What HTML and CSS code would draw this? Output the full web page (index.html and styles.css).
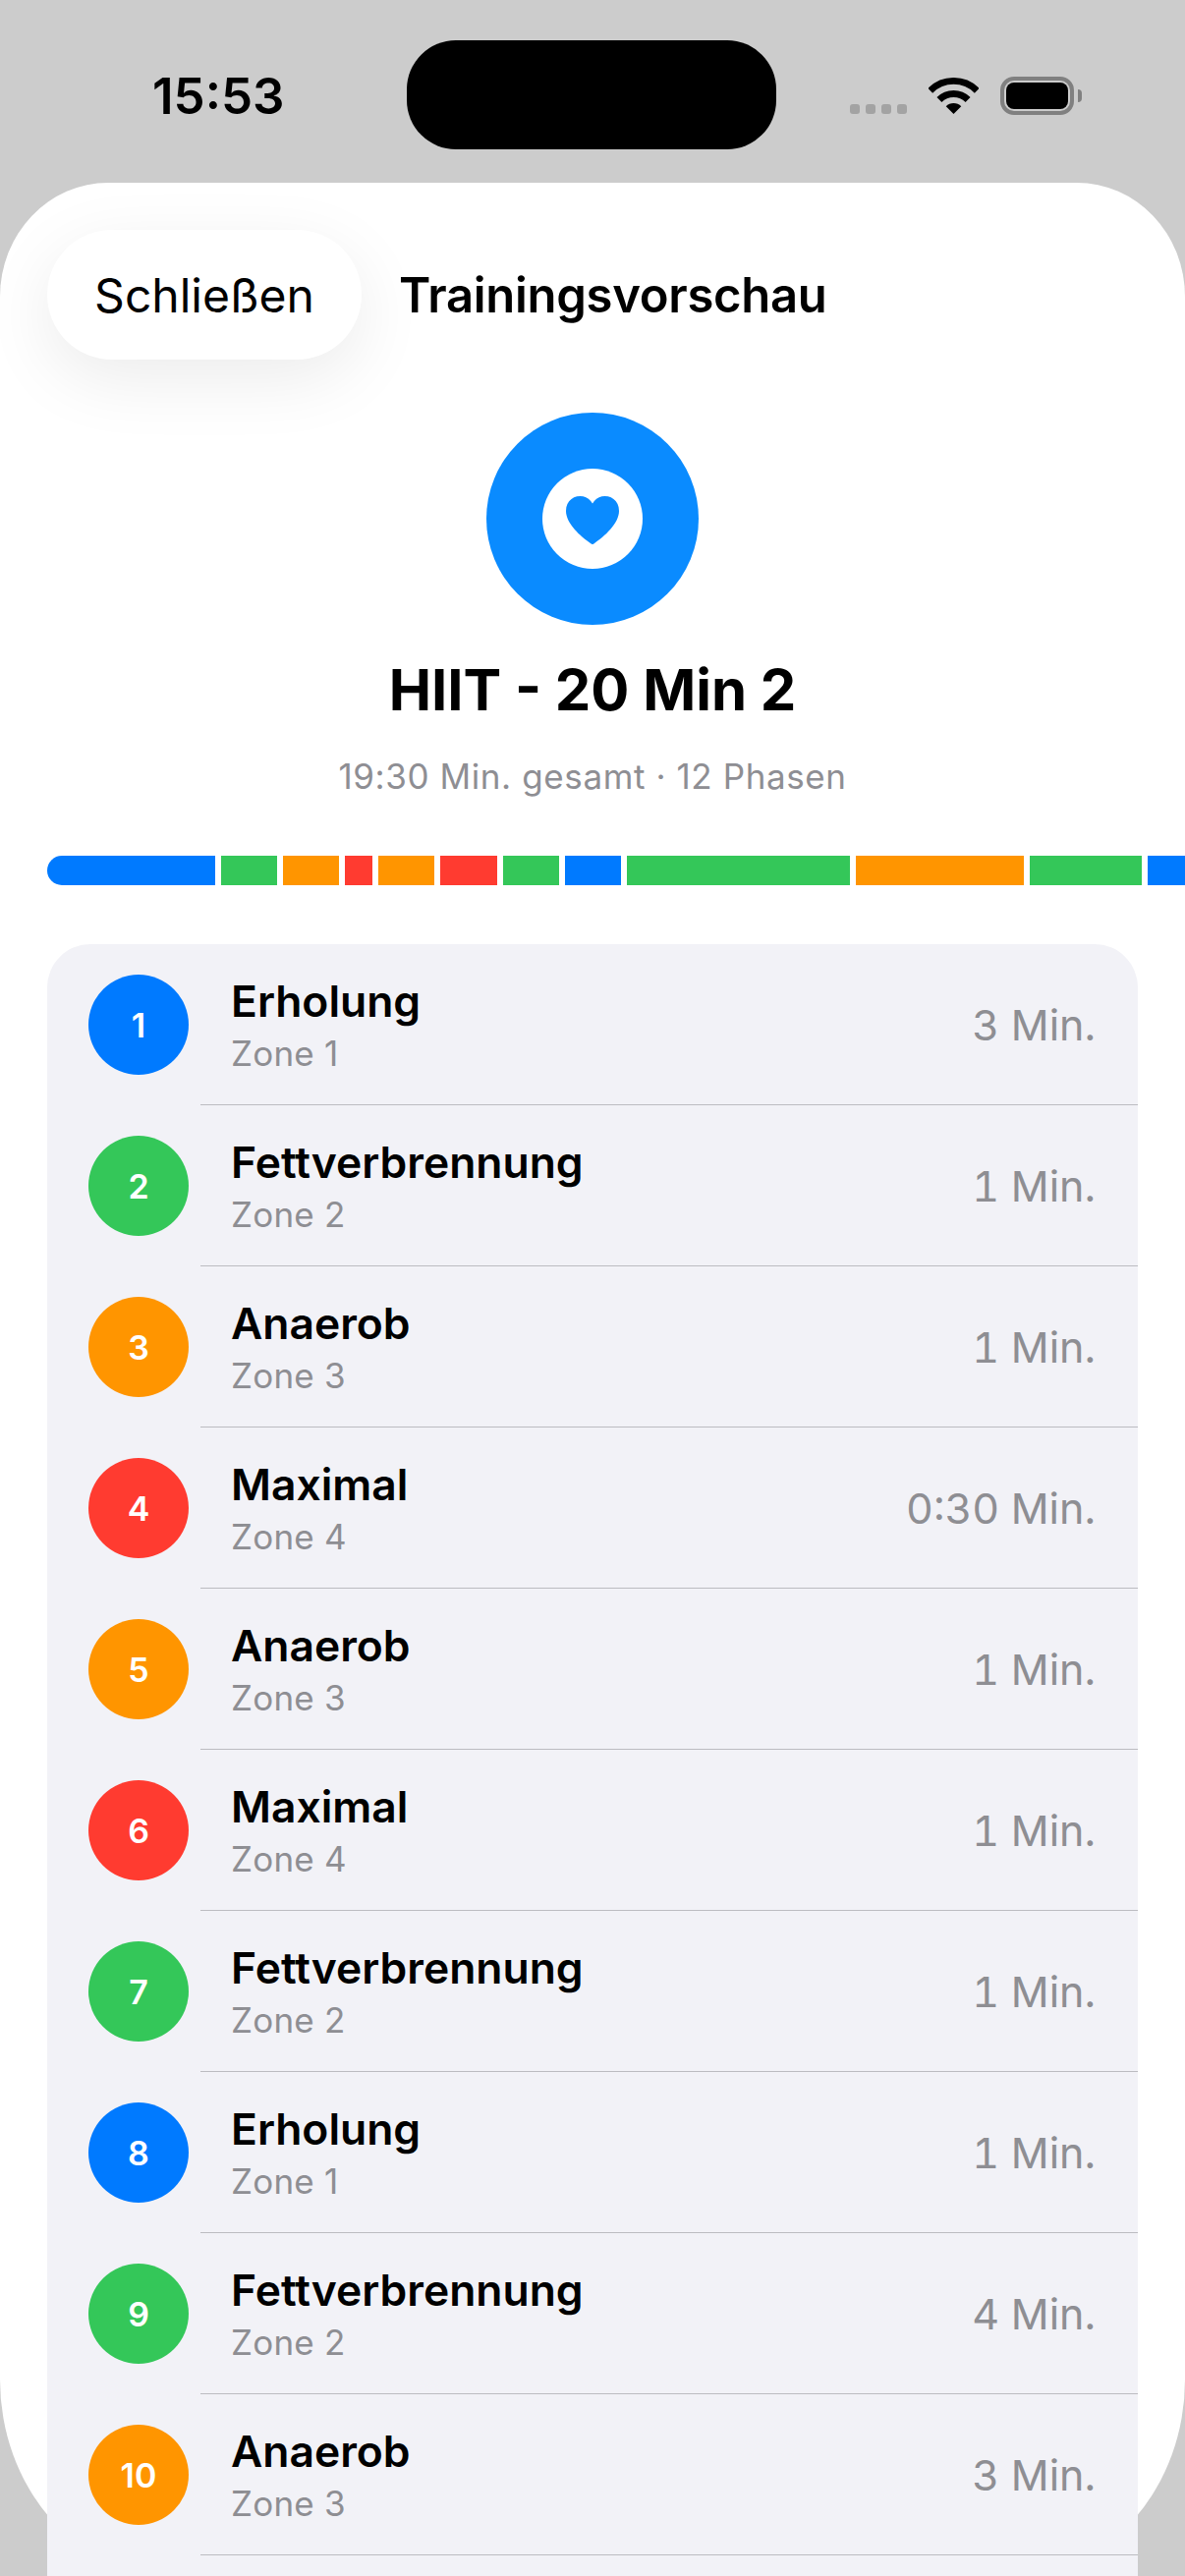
FILE: index.html
```html
<!DOCTYPE html>
<html lang="de">
<head>
    <meta charset="UTF-8">
    <meta name="viewport" content="width=device-width, initial-scale=1.0">
    <title>Trainingsvorschau</title>
    <link rel="stylesheet" href="styles.css">
</head>
<body>
    <div class="status-bar">
        <span class="time">15:53</span>
        <div class="island"></div>
        <div class="status-icons">
            <div class="signal"><i></i><i></i><i></i><i></i></div>
            <svg class="wifi" viewBox="0 0 51 37">
                <path d="M1.74 13.24A33.6 33.6 0 0 1 49.26 13.24" fill="none" stroke="#000" stroke-width="6.8"/>
                <path d="M10.93 22.43A20.6 20.6 0 0 1 40.07 22.43" fill="none" stroke="#000" stroke-width="7"/>
                <path d="M25.5 37L17.72 29.22A11 11 0 0 1 33.28 29.22Z" fill="#000"/>
            </svg>
            <div class="battery"><div class="battery-fill"></div></div>
        </div>
    </div>

    <div class="sheet">
        <div class="sheet-header">
            <button class="close-btn">Schließen</button>
            <h2>Trainingsvorschau</h2>
        </div>

        <div class="hero">
            <div class="hero-icon">
                <div class="hero-icon-inner">
                    <svg class="heart" viewBox="0 0 54 49">
                        <path d="M27 7.5C24 2.5 19.5 0 14.5 0C6 0 0 6.3 0 15C0 28 15 41 25 48C26 48.7 26.5 49 27 49C27.5 49 28 48.7 29 48C39 41 54 28 54 15C54 6.3 48 0 39.5 0C34.5 0 30 2.5 27 7.5Z" fill="#0a8bff"/>
                    </svg>
                </div>
            </div>
            <h1>HIIT - 20 Min 2</h1>
            <p>19:30 Min. gesamt · 12 Phasen</p>
        </div>

        <div class="timeline">
            <div class="seg blue" style="width:171px"></div>
            <div class="seg green" style="width:57px"></div>
            <div class="seg orange" style="width:57px"></div>
            <div class="seg red" style="width:28px"></div>
            <div class="seg orange" style="width:57px"></div>
            <div class="seg red" style="width:58px"></div>
            <div class="seg green" style="width:57px"></div>
            <div class="seg blue" style="width:57px"></div>
            <div class="seg green" style="width:227px"></div>
            <div class="seg orange" style="width:171px"></div>
            <div class="seg green" style="width:114px"></div>
            <div class="seg blue" style="width:57px"></div>
        </div>

        <div class="phase-list">
            <div class="phase">
                <div class="num blue">1</div>
                <div class="phase-body">
                    <div class="phase-text"><strong>Erholung</strong><span>Zone 1</span></div>
                    <div class="phase-time">3 Min.</div>
                </div>
            </div>
            <div class="phase">
                <div class="num green">2</div>
                <div class="phase-body">
                    <div class="phase-text"><strong>Fettverbrennung</strong><span>Zone 2</span></div>
                    <div class="phase-time">1 Min.</div>
                </div>
            </div>
            <div class="phase">
                <div class="num orange">3</div>
                <div class="phase-body">
                    <div class="phase-text"><strong>Anaerob</strong><span>Zone 3</span></div>
                    <div class="phase-time">1 Min.</div>
                </div>
            </div>
            <div class="phase">
                <div class="num red">4</div>
                <div class="phase-body">
                    <div class="phase-text"><strong>Maximal</strong><span>Zone 4</span></div>
                    <div class="phase-time">0:30 Min.</div>
                </div>
            </div>
            <div class="phase">
                <div class="num orange">5</div>
                <div class="phase-body">
                    <div class="phase-text"><strong>Anaerob</strong><span>Zone 3</span></div>
                    <div class="phase-time">1 Min.</div>
                </div>
            </div>
            <div class="phase">
                <div class="num red">6</div>
                <div class="phase-body">
                    <div class="phase-text"><strong>Maximal</strong><span>Zone 4</span></div>
                    <div class="phase-time">1 Min.</div>
                </div>
            </div>
            <div class="phase">
                <div class="num green">7</div>
                <div class="phase-body">
                    <div class="phase-text"><strong>Fettverbrennung</strong><span>Zone 2</span></div>
                    <div class="phase-time">1 Min.</div>
                </div>
            </div>
            <div class="phase">
                <div class="num blue">8</div>
                <div class="phase-body">
                    <div class="phase-text"><strong>Erholung</strong><span>Zone 1</span></div>
                    <div class="phase-time">1 Min.</div>
                </div>
            </div>
            <div class="phase">
                <div class="num green">9</div>
                <div class="phase-body">
                    <div class="phase-text"><strong>Fettverbrennung</strong><span>Zone 2</span></div>
                    <div class="phase-time">4 Min.</div>
                </div>
            </div>
            <div class="phase">
                <div class="num orange">10</div>
                <div class="phase-body">
                    <div class="phase-text"><strong>Anaerob</strong><span>Zone 3</span></div>
                    <div class="phase-time">3 Min.</div>
                </div>
            </div>
        </div>
    </div>
</body>
</html>
```
FILE: styles.css
```css
html, body {
    height: 2622px;
    overflow: hidden;
}
body {
    margin: 0;
    background-color: #cccccc;
    font-family: Inter, "Noto Sans", sans-serif;
    color: #000;
}

/* status bar */
.status-bar {
    display: flex;
    align-items: flex-start;
    height: 186px;
    box-sizing: border-box;
    padding: 41px 0 0 155px;
}
.time {
    width: 259px;
    margin-top: 28px;
    font-size: 51px;
    line-height: 58px;
    font-weight: 600;
}
.island {
    width: 376px;
    height: 111px;
    border-radius: 50px;
    background-color: #000;
}
.status-icons {
    display: flex;
    align-items: flex-end;
    margin-left: 75px;
    margin-top: 37px;
    height: 39px;
}
.signal {
    display: flex;
    gap: 6px;
    margin-bottom: 1px;
}
.signal i {
    display: block;
    width: 10px;
    height: 10px;
    border-radius: 3px;
    background-color: #a3a3a3;
}
.wifi {
    width: 51px;
    height: 37px;
    margin-left: 22px;
    margin-bottom: 1px;
}
.battery {
    position: relative;
    width: 75px;
    height: 39px;
    box-sizing: border-box;
    margin-left: 22px;
    padding: 2px;
    border: 4px solid #808080;
    border-radius: 14px;
}
.battery::after {
    content: "";
    position: absolute;
    left: 75px;
    top: 9px;
    width: 4px;
    height: 13px;
    border-radius: 0 4px 4px 0;
    background-color: #808080;
}
.battery-fill {
    height: 100%;
    border-radius: 8px;
    background-color: #000;
}

/* sheet */
.sheet {
    height: 2436px;
    box-sizing: border-box;
    padding-top: 48px;
    background-color: #fff;
    border-radius: 110px 110px 175px 175px / 116px 116px 200px 200px;
}
.sheet-header {
    display: flex;
    align-items: center;
    gap: 38px;
    padding-left: 48px;
}
.close-btn {
    width: 320px;
    height: 132px;
    padding: 0;
    border: none;
    border-radius: 66px;
    background-color: #fff;
    box-shadow: 0 20px 70px rgba(0,0,0,0.08);
    font-family: inherit;
    font-size: 48px;
    color: #000;
}
.sheet-header h2 {
    margin: 0;
    font-size: 49px;
    letter-spacing: -0.3px;
    font-weight: 600;
}

/* hero */
.hero {
    display: flex;
    flex-direction: column;
    align-items: center;
    margin-top: 54px;
}
.hero-icon {
    display: flex;
    align-items: center;
    justify-content: center;
    width: 216px;
    height: 216px;
    border-radius: 50%;
    background-color: #0a8bff;
}
.hero-icon-inner {
    display: flex;
    align-items: center;
    justify-content: center;
    width: 102px;
    height: 102px;
    border-radius: 50%;
    background-color: #fff;
}
.heart {
    width: 54px;
    height: 49px;
    margin-top: 3px;
}
.hero h1 {
    margin: 33px 0 0;
    font-size: 58px;
    line-height: 66px;
    font-weight: 700;
}
.hero p {
    margin: 34px 0 0;
    font-size: 35px;
    letter-spacing: 0.6px;
    line-height: 42px;
    color: #8e8e93;
}

/* timeline */
.timeline {
    display: flex;
    gap: 6px;
    height: 30px;
    margin-top: 60px;
    padding-left: 48px;
}
.seg {
    flex: none;
}
.seg:first-child {
    border-radius: 15px 0 0 15px;
}
.blue { background-color: #007aff; }
.green { background-color: #34c759; }
.orange { background-color: #ff9500; }
.red { background-color: #ff3b30; }

/* phases */
.phase-list {
    margin: 60px 48px 0;
    padding-bottom: 164px;
    background-color: #f2f2f7;
    border-radius: 44px 44px 0 0;
}
.phase {
    display: flex;
    align-items: center;
    height: 164px;
    padding-left: 42px;
}
.num {
    display: flex;
    flex: none;
    align-items: center;
    justify-content: center;
    width: 102px;
    height: 102px;
    border-radius: 50%;
    color: #fff;
    font-size: 34px;
    font-weight: 600;
}
.phase-body {
    display: flex;
    flex: 1;
    align-items: center;
    justify-content: space-between;
    height: 100%;
    box-sizing: border-box;
    margin-left: 12px;
    padding: 0 43px 0 31px;
    border-bottom: 1px solid #bcbcc1;
}
.phase-text {
    display: flex;
    flex-direction: column;
    padding-bottom: 2px;
}
.phase-text strong {
    font-size: 44.4px;
    line-height: 54px;
    font-weight: 600;
}
.phase-text span {
    margin-top: 6px;
    font-size: 35px;
    letter-spacing: 0.2px;
    line-height: 40px;
    color: #8e8e93;
}
.phase-time {
    font-size: 43px;
    font-feature-settings: "tnum";
    color: #8e8e93;
}
```
